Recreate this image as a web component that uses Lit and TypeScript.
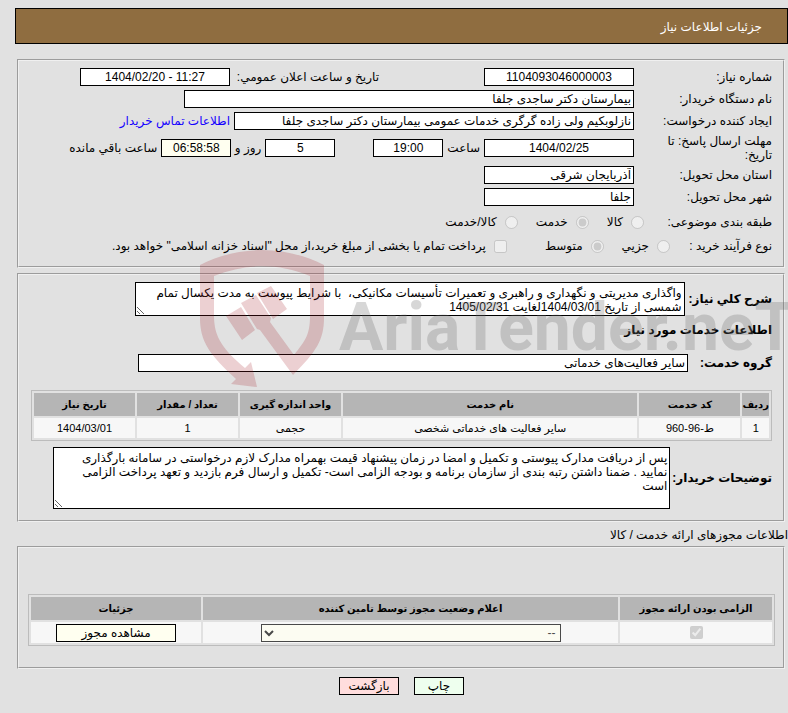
import { LitElement, html, css } from "lit";
import { customElement } from "lit/decorators.js";

@customElement("app-root")
export class AppRoot extends LitElement {
  static styles = css`
    :host {
      display: block;
      position: relative;
      overflow: hidden;
      min-height: 100vh;
      box-sizing: border-box;
      padding: 8px 0 17px;
      background: #e1e1e1;
      color: #000;
      direction: rtl;
      font: 12px/14px "Liberation Sans", "DejaVu Sans", sans-serif;
    }
    * { box-sizing: border-box; }
    .title {
      margin: 0 0 15px 15px;
      height: 36px;
      padding: 0 25px;
      border: 1px solid #000;
      background: #8f6d40;
      color: #fff;
      font-size: 12px;
      font-weight: normal;
      line-height: 36px;
    }
    fieldset {
      display: flex;
      flex-direction: column;
      min-width: 0;
      margin: 0 3px 5px 17px;
      border: 2px groove #f0f0f0;
      padding: 7px 11px;
    }
    .need { gap: 4px; min-height: 209px; }
    .row { display: flex; align-items: center; gap: 4px; min-height: 18px; white-space: nowrap; }
    .row.tall { min-height: 28px; }
    .name { width: 112px; margin-left: 22px; white-space: normal; flex: none; }
    .field {
      height: 18px;
      margin: 0;
      padding: 0 2px;
      border: 1px solid #000;
      background: #fff;
      color: #000;
      font: inherit;
      flex: none;
    }
    .code { direction: ltr; text-align: center; }
    .w70 { width: 70px; }
    .w150 { width: 150px; }
    .w400 { width: 400px; }
    .w450 { width: 450px; }
    .w550 { width: 550px; }
    .ivory { background: #fffff0; }
    .announce { width: 145px; margin-right: 101px; flex: none; }
    .gap { margin-right: 34px; }
    .days { width: 26px; }
    a { color: #1400ff; text-decoration: none; }
    .options { min-height: 20px; gap: 8px; }
    .options .name { margin-left: 0; }
    .options label { display: flex; align-items: center; gap: 8px; margin-left: 10px; }
    .options.kind { margin-top: 2px; }
    .options.kind .name { width: 120px; }
    .options.process .name { width: 94px; }
    .options input { width: 13px; height: 13px; margin: 0; }
    .options .treasury { margin-right: 20px; }
    .services { height: 249px; margin-bottom: 6px; }
    .strong { font-weight: bold; flex: none; }
    .group .strong { width: 80px; }
    textarea {
      display: block;
      margin: 0;
      padding: 3px 2px;
      border: 1px solid #000;
      background: #fff;
      color: #000;
      font: inherit;
      white-space: pre;
      overflow: hidden;
      flex: none;
    }
    .summary { width: 550px; height: 34px; }
    .remarks { gap: 2px; padding-left: 23px; }
    .notes { flex: 1; min-width: 0; height: 62px; }
    .heading { margin: 7px 0 17px; font-size: 12px; line-height: 14px; }
    table {
      width: 100%;
      border: 1px solid #bcbcbc;
      border-spacing: 2px;
      table-layout: fixed;
      text-align: center;
    }
    th { height: 23px; padding: 0; background: #b5b5b5; font-size: 10px; }
    td { height: 21px; padding: 0; background: #f7f7f7; font-size: 11px; }
    .items { width: auto; margin: 18px 0 6px 1px; }
    .items td { height: 20px; }
    .c26 { width: 26px; }
    .c101 { width: 101px; }
    .c151 { width: 152px; }
    .c169 { width: 170px; }
    .caption { margin: 0 0 4px; text-align: right; }
    .permits { height: 123px; padding: 46px 8px 0 9px; margin-bottom: 8px; }
    td input, td select, td button { display: block; margin: 0 auto; }
    button, select {
      height: 18px;
      border: 1px solid #000;
      border-radius: 0;
      padding: 0;
      color: #000;
      font: 12px/14px "Liberation Sans", "DejaVu Sans", sans-serif;
      background: #fffff0;
    }
    select { width: 300px; opacity: 0.7; }
    .view { width: 120px; }
    .actions { display: flex; justify-content: center; gap: 15px; margin-left: 15px; }
    .print { width: 50px; background: #efe; }
    .back { width: 60px; background: #fdd; }
    .mark {
      position: absolute;
      top: 248px;
      left: 200px;
      display: flex;
      direction: ltr;
      pointer-events: none;
    }
    .mark svg { width: 125px; height: 140px; flex: none; }
    .brand {
      margin: 30px 0 0 14px;
      font: bold 66px/100px Roboto, "Liberation Sans", sans-serif;
      color: rgba(110, 110, 110, 0.28);
    }
  `;

  render() {
    return html`
      <h1 class="title">جزئیات اطلاعات نیاز</h1>
      <fieldset class="need">
        <div class="row">
          <label class="name" for="no">شماره نیاز:</label>
          <input id="no" type="text" class="field code w150" readonly value="1104093046000003" />
          <label class="announce" for="ann">تاریخ و ساعت اعلان عمومي:</label>
          <input id="ann" type="text" class="field code w150" readonly value="1404/02/20 - 11:27" />
        </div>
        <div class="row">
          <label class="name" for="org">نام دستگاه خریدار:</label>
          <input id="org" type="text" class="field w450" readonly value="بیمارستان دکتر ساجدی جلفا" />
        </div>
        <div class="row">
          <label class="name" for="by">ایجاد کننده درخواست:</label>
          <input id="by" type="text" class="field w400" readonly value="نازلوبکیم ولی زاده گرگری خدمات عمومی بیمارستان دکتر ساجدی جلفا" />
          <a href="#contact">اطلاعات تماس خریدار</a>
        </div>
        <div class="row tall">
          <label class="name" for="due">مهلت ارسال پاسخ: تا تاریخ:</label>
          <input id="due" type="text" class="field code w150" readonly value="1404/02/25" />
          <label for="hour">ساعت</label>
          <input id="hour" type="text" class="field code w70" readonly value="19:00" />
          <input id="days" type="text" class="field code w70 gap" readonly value="5" />
          <label class="days" for="days">روز و</label>
          <input id="left" type="text" class="field code w70 ivory" readonly value="06:58:58" />
          <label for="left">ساعت باقي مانده</label>
        </div>
        <div class="row">
          <label class="name" for="prov">استان محل تحویل:</label>
          <input id="prov" type="text" class="field w150" readonly value="آذربایجان شرقی" />
        </div>
        <div class="row">
          <label class="name" for="city">شهر محل تحویل:</label>
          <input id="city" type="text" class="field w150" readonly value="جلفا" />
        </div>
        <div class="row options kind">
          <span class="name">طبقه بندی موضوعی:</span>
          <label><input type="radio" name="kind" disabled />کالا</label>
          <label><input type="radio" name="kind" disabled checked />خدمت</label>
          <label><input type="radio" name="kind" disabled />کالا/خدمت</label>
        </div>
        <div class="row options process">
          <span class="name">نوع فرآیند خرید :</span>
          <label><input type="radio" name="process" disabled />جزیي</label>
          <label><input type="radio" name="process" disabled checked />متوسط</label>
          <label class="treasury"><input type="checkbox" disabled />پرداخت تمام یا بخشی از مبلغ خرید،از محل "اسناد خزانه اسلامی" خواهد بود.</label>
        </div>
      </fieldset>

      <fieldset class="services">
        <div class="row">
          <label class="strong" for="sum">شرح کلي نیاز:</label>
          <textarea id="sum" class="summary" readonly .value=${"واگذاری مدیریتی و نگهداری و راهبری و تعمیرات تأسیسات مکانیکی،  با شرایط پیوست به مدت یکسال تمام\nشمسی از تاریخ 1404/03/01لغایت 1405/02/31"}></textarea>
        </div>
        <h2 class="heading">اطلاعات خدمات مورد نیاز</h2>
        <div class="row group">
          <label class="strong" for="grp">گروه خدمت:</label>
          <input id="grp" type="text" class="field w550" readonly value="سایر فعالیت‌های خدماتی" />
        </div>
        <table class="items">
          <thead>
            <tr>
              <th class="c26">ردیف</th><th class="c101">کد خدمت</th><th>نام خدمت</th>
              <th class="c101">واحد اندازه گیری</th><th class="c101">تعداد / مقدار</th><th class="c101">تاریخ نیاز</th>
            </tr>
          </thead>
          <tbody>
            <tr><td>1</td><td>ط-96-960</td><td>سایر فعالیت های خدماتی شخصی</td><td>حجمی</td><td>1</td><td>1404/03/01</td></tr>
          </tbody>
        </table>
        <div class="row remarks">
          <label class="strong" for="notes">توضیحات خریدار:</label>
          <textarea id="notes" class="notes" readonly .value=${"پس از دریافت مدارک پیوستی و تکمیل و امضا در زمان پیشنهاد قیمت بهمراه مدارک لازم درخواستی در سامانه بارگذاری\nنمایید . ضمنا داشتن رتبه بندی از سازمان برنامه و بودجه الزامی است- تکمیل و ارسال فرم بازدید و تعهد پرداخت الزامی\nاست"}></textarea>
        </div>
      </fieldset>

      <p class="caption">اطلاعات مجوزهای ارائه خدمت / کالا</p>
      <fieldset class="permits">
        <table>
          <thead>
            <tr><th class="c151">الزامی بودن ارائه مجوز</th><th>اعلام وضعیت مجوز توسط تامین کننده</th><th class="c169">جزئیات</th></tr>
          </thead>
          <tbody>
            <tr>
              <td><input type="checkbox" aria-label="الزامی بودن ارائه مجوز" disabled checked /></td>
              <td><select aria-label="اعلام وضعیت مجوز" disabled><option>--</option></select></td>
              <td><button class="view">مشاهده مجوز</button></td>
            </tr>
          </tbody>
        </table>
      </fieldset>
      <div class="actions">
        <button class="print">چاپ</button>
        <button class="back">بازگشت</button>
      </div>

      <div class="mark" aria-hidden="true">
        <svg viewBox="0 0 125 140">
          <path
            fill="#a0141e"
            fill-opacity="0.2"
            d="M0 17C40-3 84-3 124 17V70C124 92 116 104 93 127L60 82L57 81L41 55L56 47L71 70L70 74L94 107C106 92 110 86 110 68V28C78 15 46 15 14 28V68C14 90 24 102 45 120L51 114L57 139L31 136L36 131C10 107 0 94 0 70ZM26 68L41 59L55 82L42 92ZM57 45L71 38L87 61L73 71Z"
          />
        </svg>
        <span class="brand">AriaTender.neT</span>
      </div>
    `;
  }
}
